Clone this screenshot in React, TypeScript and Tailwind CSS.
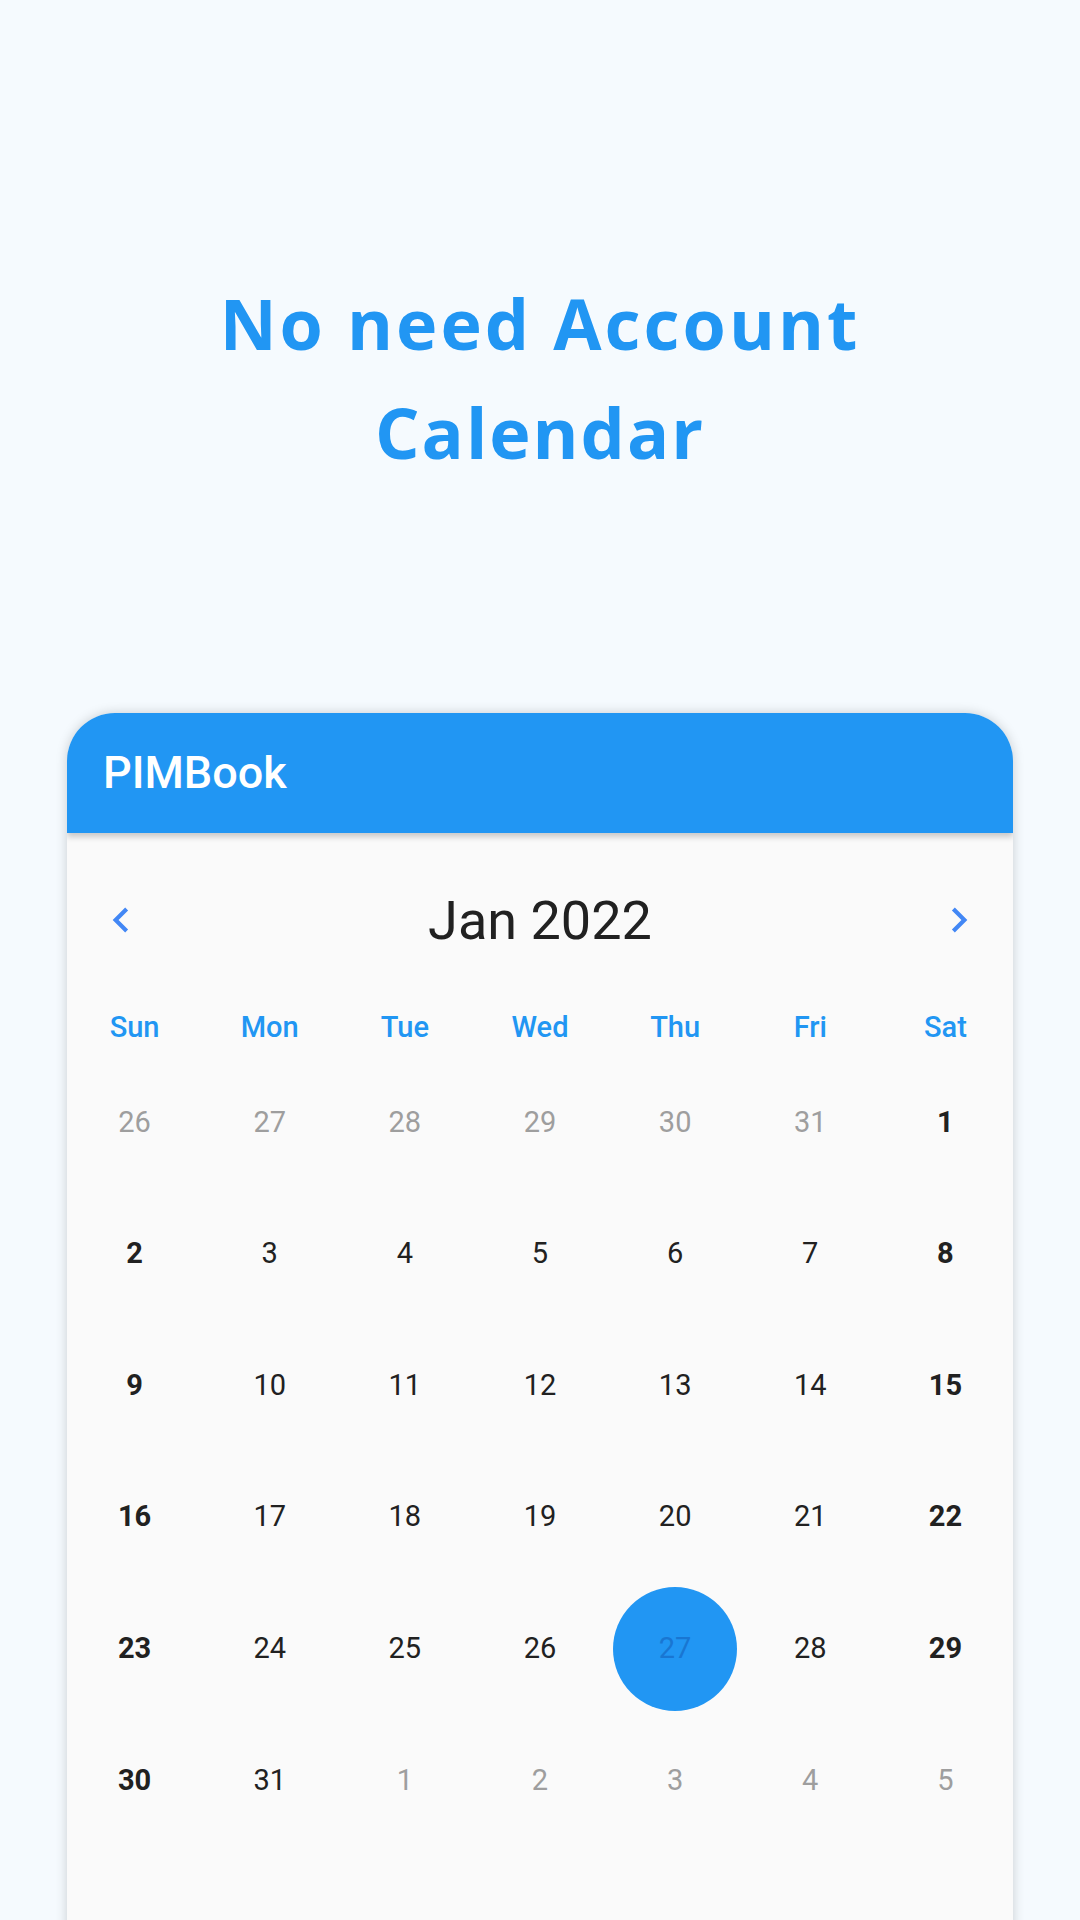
import React from 'react';

const weekDays = ['Sun', 'Mon', 'Tue', 'Wed', 'Thu', 'Fri', 'Sat'];

type Day = { n: number; muted?: boolean; selected?: boolean };

const weeks: Day[][] = [
  [{ n: 26, muted: true }, { n: 27, muted: true }, { n: 28, muted: true }, { n: 29, muted: true }, { n: 30, muted: true }, { n: 31, muted: true }, { n: 1 }],
  [{ n: 2 }, { n: 3 }, { n: 4 }, { n: 5 }, { n: 6 }, { n: 7 }, { n: 8 }],
  [{ n: 9 }, { n: 10 }, { n: 11 }, { n: 12 }, { n: 13 }, { n: 14 }, { n: 15 }],
  [{ n: 16 }, { n: 17 }, { n: 18 }, { n: 19 }, { n: 20 }, { n: 21 }, { n: 22 }],
  [{ n: 23 }, { n: 24 }, { n: 25 }, { n: 26 }, { n: 27, selected: true }, { n: 28 }, { n: 29 }],
  [{ n: 30 }, { n: 31 }, { n: 1, muted: true }, { n: 2, muted: true }, { n: 3, muted: true }, { n: 4, muted: true }, { n: 5, muted: true }],
];

function ChevronLeft() {
  return (
    <svg width="50" height="50" viewBox="0 0 24 24" fill="#4287f5">
      <path d="M15.41 7.41L14 6l-6 6 6 6 1.41-1.41L10.83 12z" />
    </svg>
  );
}

function ChevronRight() {
  return (
    <svg width="50" height="50" viewBox="0 0 24 24" fill="#4287f5">
      <path d="M10 6L8.59 7.41 13.17 12l-4.58 4.59L10 18l6-6z" />
    </svg>
  );
}

export default function App() {
  return (
    <div className="min-h-[1920px] h-[1920px] overflow-hidden bg-[#f5fafe] font-['Roboto',sans-serif]">
      {/* headline */}
      <div className="pt-[269px] text-center font-['Open_Sans',sans-serif] font-bold text-[70px] leading-[109px] tracking-[3px] text-[#2196f3]">
        <div>No need Account</div>
        <div className="tracking-[2px]">Calendar</div>
      </div>

      {/* app card */}
      <div className="mt-[226px] mx-[67px] h-[1300px] rounded-t-[48px] bg-[#fafafa] shadow-[0_0_12px_rgba(0,0,0,0.18)] overflow-hidden">
        <div className="h-[120px] bg-[#2196f3] flex items-center pl-[36px] shadow-[0_4px_6px_rgba(0,0,0,0.2)] relative">
          <span className="text-white text-[45px] font-medium">PIMBook</span>
        </div>

        <div className="pt-[55px]">
          <div className="flex items-center justify-between px-[29px] h-[64px]">
            <ChevronLeft />
            <span className="text-[54px] text-[#212121]">Jan 2022</span>
            <ChevronRight />
          </div>

          <div className="grid grid-cols-7 mt-[54px]">
            {weekDays.map((d) => (
              <div key={d} className="text-center text-[29px] font-medium text-[#2196f3]">
                {d}
              </div>
            ))}
          </div>

          <div className="mt-[7px]">
            {weeks.map((week, i) => (
              <div key={i} className="grid grid-cols-7 h-[131.6px]">
                {week.map((day, j) => {
                  const weekend = !day.muted && (j === 0 || j === 6);
                  return (
                    <div key={j} className="flex items-center justify-center">
                      {day.selected ? (
                        <div className="w-[124px] h-[124px] rounded-full bg-[#2196f3] flex items-center justify-center text-[29px] text-[#1976d2]">
                          {day.n}
                        </div>
                      ) : (
                        <span
                          className={
                            day.muted
                              ? 'text-[29px] text-[#9e9e9e]'
                              : weekend
                              ? 'text-[29px] font-bold text-[#212121]'
                              : 'text-[29px] text-[#212121]'
                          }
                        >
                          {day.n}
                        </span>
                      )}
                    </div>
                  );
                })}
              </div>
            ))}
          </div>
        </div>
      </div>
    </div>
  );
}
